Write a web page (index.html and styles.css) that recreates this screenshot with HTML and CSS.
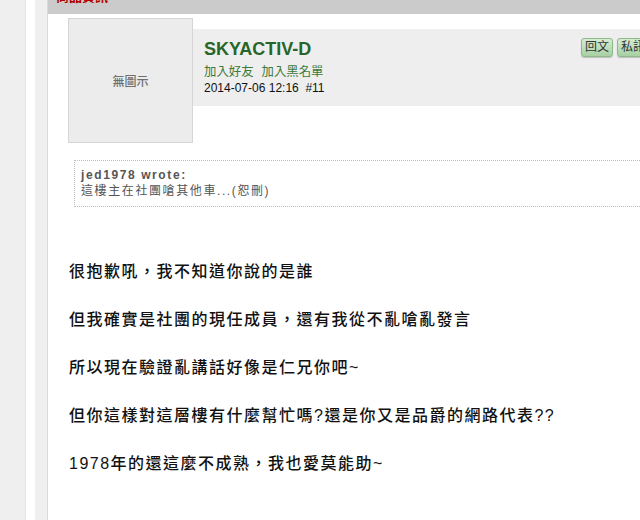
FILE: index.html
```html
<!DOCTYPE html>
<html lang="zh-Hant">
<head>
  <meta charset="UTF-8">
  <title>SKYACTIV-D #11</title>
  <link rel="stylesheet" href="styles.css">
</head>
<body>
  <div class="page">
    <div class="rail"></div>
    <div class="gutter"></div>
    <div class="side"></div>

    <div class="main">
      <div class="title-bar"><span>商品資訊</span></div>

      <div class="post">
        <div class="post-head">
          <div class="avatar">無圖示</div>
          <div class="info">
            <div class="who">
              <div class="name">SKYACTIV-D</div>
              <div class="links"><a href="#">加入好友</a><a href="#">加入黑名單</a></div>
              <div class="date">2014-07-06 12:16 &nbsp;#11</div>
            </div>
            <div class="actions">
              <button type="button">回文</button>
              <button type="button">私訊</button>
            </div>
          </div>
        </div>

        <div class="quote">
          <div class="quote-by">jed1978 wrote:</div>
          <div>這樓主在社團嗆其他車...(恕刪)</div>
        </div>

        <div class="content">
          <p>很抱歉吼，我不知道你說的是誰</p>
          <p>但我確實是社團的現任成員，還有我從不亂嗆亂發言</p>
          <p>所以現在驗證亂講話好像是仁兄你吧~</p>
          <p>但你這樣對這層樓有什麼幫忙嗎?還是你又是品爵的網路代表??</p>
          <p>1978年的還這麼不成熟，我也愛莫能助~</p>
        </div>
      </div>
    </div>
  </div>
</body>
</html>
```

FILE: styles.css
```css
html, body {
  margin: 0;
  overflow: hidden;
}
body {
  font-family: "Liberation Sans", "Noto Sans CJK TC", sans-serif;
  color: #222;
  background: #fff;
}
.page {
  display: flex;
  width: 680px;
  min-height: 520px;
}
.rail {
  width: 25px;
  background: #efefef;
  border-right: 1px solid #e3e3e3;
}
.gutter {
  width: 9px;
  background: #fff;
}
.side {
  width: 12px;
  background: #efefef;
  border-right: 1px solid #d9d9d9;
}
.main {
  width: 620px;
  flex-shrink: 0;
  background: #fff;
}
.title-bar {
  height: 14px;
  overflow: hidden;
  background: #cbcbcb;
  padding-left: 8px;
}
.title-bar span {
  display: block;
  margin-top: -11px;
  line-height: 16px;
  font-size: 13px;
  font-weight: bold;
  color: #b10000;
}
.post {
  padding: 4px 12px 0 20px;
}
.post-head {
  display: flex;
  align-items: flex-start;
}
.avatar {
  width: 123px;
  height: 123px;
  border: 1px solid #d6d6d6;
  background: #ececec;
  display: flex;
  align-items: center;
  justify-content: center;
  font-size: 12px;
  font-weight: 500;
  color: #6f6f6f;
  flex-shrink: 0;
}
.info {
  flex: 1;
  display: flex;
  justify-content: space-between;
  align-items: flex-start;
  margin-top: 11px;
  height: 68px;
  padding: 9px 7px 0 11px;
  background: #eeeeee;
}
.name {
  font-size: 18px;
  line-height: 22px;
  font-weight: bold;
  color: #276628;
  margin-bottom: 4px;
}
.links {
  display: flex;
  gap: 8px;
  font-size: 12.4px;
  line-height: 16px;
}
.links a {
  color: #3b7a3b;
  text-decoration: none;
}
.date {
  font-size: 12px;
  line-height: 16px;
  color: #111;
}
.actions {
  display: flex;
  gap: 4px;
}
.actions button {
  height: 19px;
  padding: 0 3px;
  font-family: inherit;
  font-size: 12px;
  line-height: 17px;
  color: #333;
  border: 1px solid #8fb98b;
  border-radius: 3px;
  background: linear-gradient(#d5ecd1, #a7d0a2);
  box-shadow: 0 1px 1px rgba(0, 0, 0, 0.2);
  cursor: pointer;
}
.quote {
  margin: 17px 0 0 6px;
  padding: 6px 6px 7px;
  border: 1px dotted #bcbcbc;
  font-size: 12px;
  line-height: 16px;
  letter-spacing: 1.6px;
  color: #555;
}
.quote-by {
  font-weight: bold;
}
.content {
  margin: 53px 0 0 1px;
  font-size: 16px;
  line-height: 24px;
  letter-spacing: 1.5px;
  font-weight: 500;
  color: #111;
}
.content p {
  margin: 0 0 24px;
}
```
